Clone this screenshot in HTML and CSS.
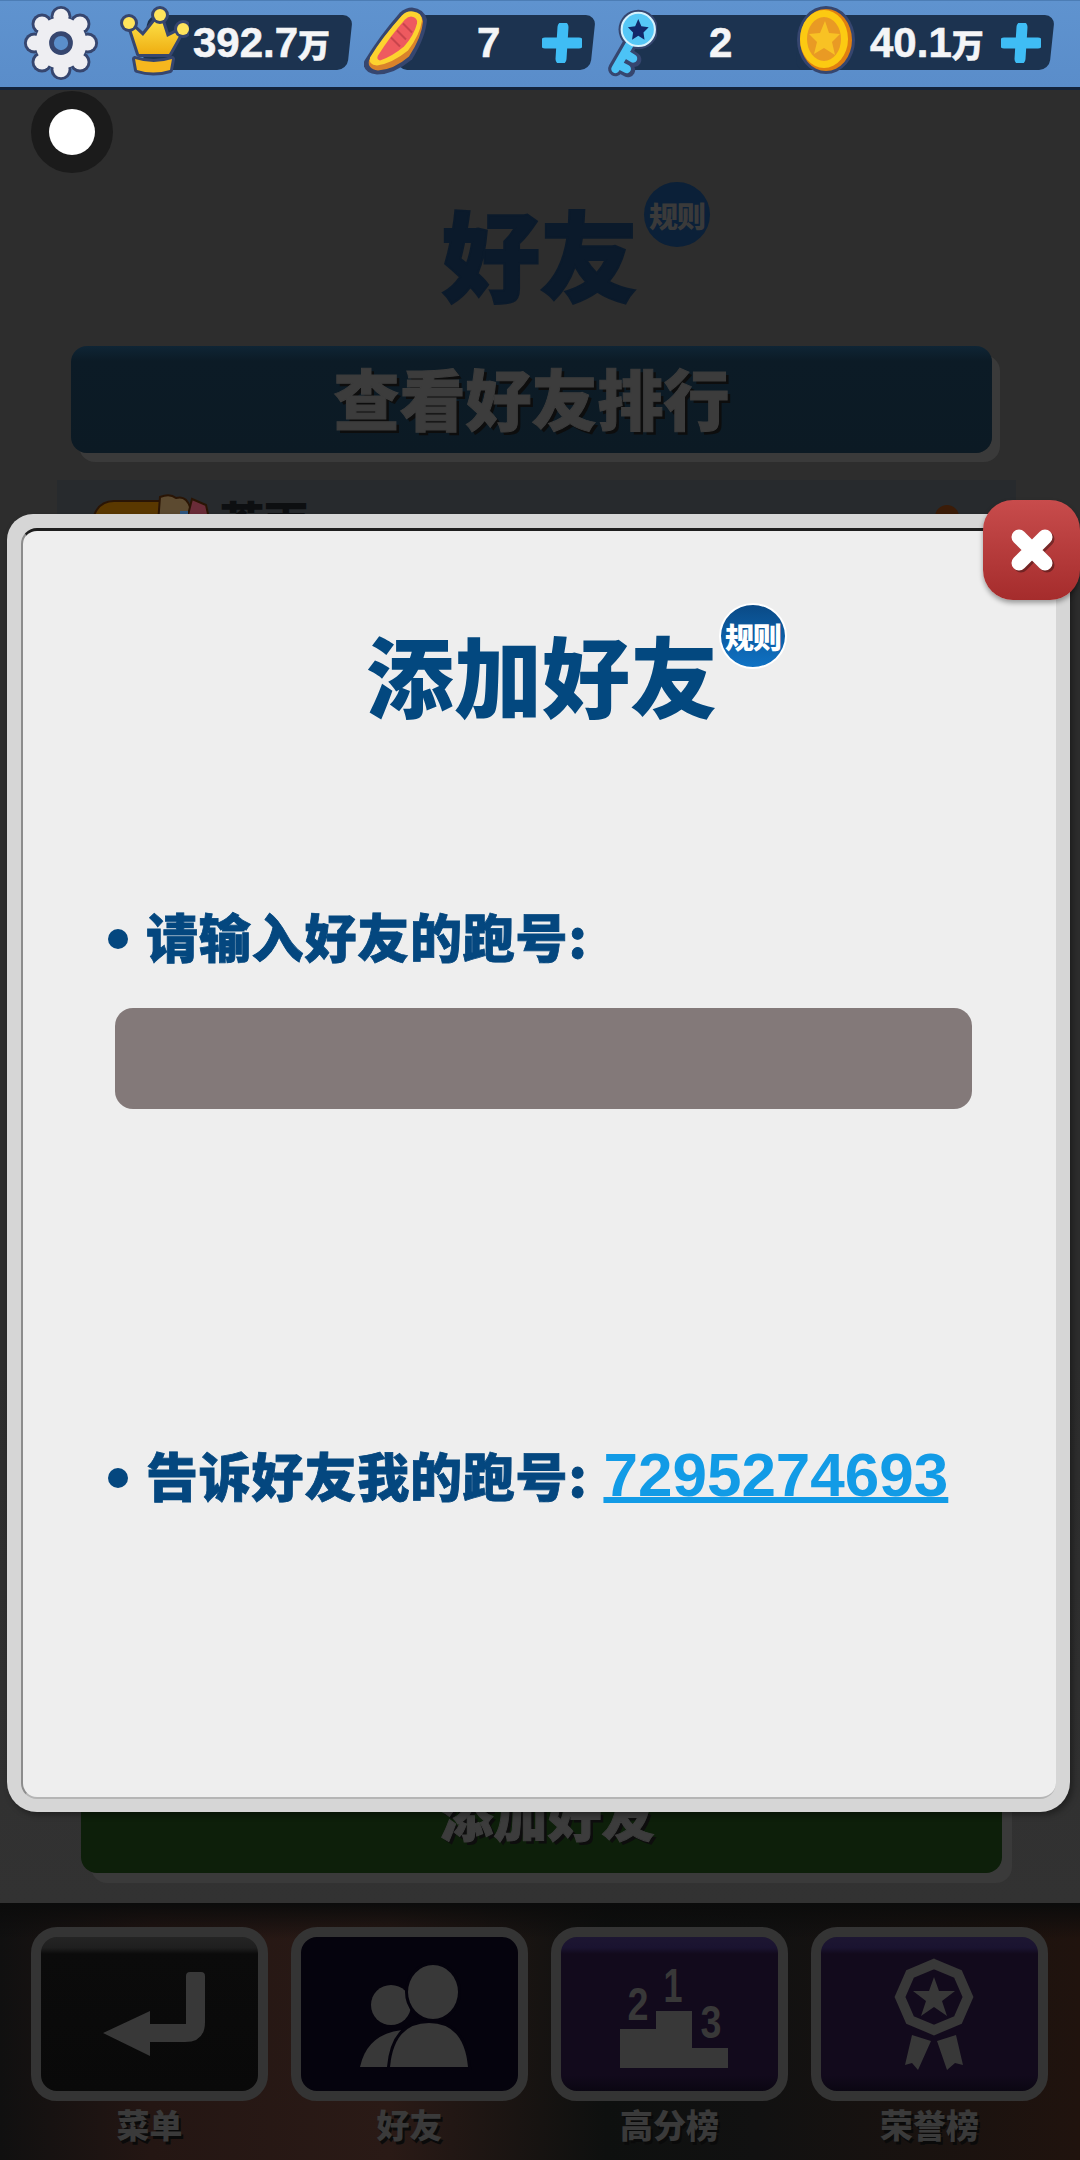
FILE: index.html
```html
<!DOCTYPE html>
<html lang="zh-CN">
<head>
    <meta charset="UTF-8">
    <meta name="viewport" content="width=device-width, initial-scale=1.0">
    <title>添加好友</title>
    <link rel="stylesheet" href="styles.css">
</head>
<body>

<div class="screen">

    <!-- Top Bar -->
    <header class="topbar">
        <svg class="gear" viewBox="0 0 80 80">
            <g fill="#36466f">
                <circle cx="40" cy="12" r="11"/><circle cx="60" cy="20" r="11"/><circle cx="68" cy="40" r="11"/><circle cx="60" cy="60" r="11"/>
                <circle cx="40" cy="68" r="11"/><circle cx="20" cy="60" r="11"/><circle cx="12" cy="40" r="11"/><circle cx="20" cy="20" r="11"/>
                <circle cx="40" cy="40" r="28"/>
            </g>
            <g fill="#eeeef2">
                <circle cx="40" cy="12" r="8"/><circle cx="60" cy="20" r="8"/><circle cx="68" cy="40" r="8"/><circle cx="60" cy="60" r="8"/>
                <circle cx="40" cy="68" r="8"/><circle cx="20" cy="60" r="8"/><circle cx="12" cy="40" r="8"/><circle cx="20" cy="20" r="8"/>
                <circle cx="40" cy="40" r="27"/>
            </g>
            <circle cx="40" cy="40" r="10" fill="#5b8fcb" stroke="#36466f" stroke-width="5"/>
        </svg>

        <div class="stat stat-score">
            <svg class="stat-icon crown" viewBox="0 0 71 71">
                <path class="outlined" fill="url(#crownFill)" d="M11 18 L25 31 L42 10 L49 32 L65 24 L51 49 L21 49 Z"/>
                <circle class="outlined" cx="11" cy="18" r="6" fill="#ffe45c"/>
                <circle class="outlined" cx="42" cy="10" r="6" fill="#ffe45c"/>
                <circle class="outlined" cx="65" cy="24" r="6" fill="#ffe45c"/>
                <path class="outlined" fill="#f6b71e" d="M17 54 Q36 60 54 54 L52 65 Q35 70 19 65 Z"/>
                <defs>
                    <linearGradient id="crownFill" x1="0" y1="0" x2="0" y2="1">
                        <stop offset="0" stop-color="#ffe84f"/>
                        <stop offset="1" stop-color="#efae12"/>
                    </linearGradient>
                </defs>
            </svg>
            <span class="stat-value">392.7<span class="wan">万</span></span>
        </div>

        <div class="stat stat-board">
            <svg class="stat-icon board" viewBox="0 0 63 68">
                <path fill="#36466f" d="M48 1 Q60 2 63 13 Q62 30 48 53 Q30 68 13 68 Q-2 66 0 55 Q15 30 36 6 Q42 1 48 1 Z"/>
                <path fill="#d9822b" d="M49 6 Q58 7 59 15 Q58 30 45 50 Q30 63 14 64 Q3 62 5 54 Q18 32 38 9 Q43 5 49 6 Z"/>
                <path fill="#fdd32f" d="M49 5 Q58 6 58 14 Q56 28 44 44 Q28 57 13 59 Q4 58 6 51 Q18 31 38 9 Q43 4 49 5 Z"/>
                <path fill="#ee5a5f" d="M47 10 Q54 11 53 17 Q50 29 40 40 Q28 50 16 54 Q12 53 14 49 Q26 30 41 13 Q44 10 47 10 Z"/>
                <path d="M27 31 L36 40 M33 24 L42 33 M39 17 L48 26" stroke="#c9444c" stroke-width="2"/>
            </svg>
            <span class="stat-value">7</span>
            <svg class="plus" viewBox="0 0 40 40"><path d="M21 4 L19 36 M3 20 L37 20" stroke="#3fbdf5" stroke-width="11" stroke-linecap="round"/></svg>
        </div>

        <div class="stat stat-key">
            <svg class="stat-icon key" viewBox="0 0 50 68">
                <path d="M32 20 L10 58 M19 43 L28 49 M13 54 L22 59" stroke="#36466f" stroke-width="14" stroke-linecap="round"/>
                <circle cx="32" cy="20" r="19" fill="#36466f"/>
                <path d="M32 20 L10 58 M19 43 L27 48 M13 54 L21 58" stroke="#4cc3f6" stroke-width="8" stroke-linecap="round"/>
                <circle cx="32" cy="20" r="16" fill="#56c8f7" stroke="#d6f2fd" stroke-width="2"/>
                <path fill="#12296a" d="M32 10 L35 17 L42 18 L37 23 L38 30 L32 26 L26 30 L27 23 L22 18 L29 17 Z"/>
            </svg>
            <span class="stat-value">2</span>
        </div>

        <div class="stat stat-coin">
            <svg class="stat-icon coin" viewBox="0 0 58 70">
                <ellipse cx="29" cy="35" rx="29" ry="34" fill="#36466f"/>
                <ellipse cx="29" cy="35" rx="26" ry="31" fill="#e07f10"/>
                <ellipse cx="27" cy="34" rx="24" ry="29" fill="#fcca12"/>
                <ellipse cx="27" cy="34" rx="17" ry="22" fill="#e99a24"/>
                <path fill="#f8c224" d="M28 16 L32 28 L43 29 L35 37 L38 50 L27 43 L17 49 L20 37 L12 29 L23 28 Z"/>
            </svg>
            <span class="stat-value">40.1<span class="wan">万</span></span>
            <svg class="plus" viewBox="0 0 40 40"><path d="M21 4 L19 36 M3 20 L37 20" stroke="#3fbdf5" stroke-width="11" stroke-linecap="round"/></svg>
        </div>
    </header>

    <!-- Dimmed page behind the dialog -->
    <main class="page">
        <div class="page-title">
            <h1>好友</h1>
            <span class="rule-badge rule-badge-dim">规则</span>
        </div>

        <button class="big-btn big-btn-blue">查看好友排行</button>

        <section class="friend-panel">
            <div class="friend-row">
                <svg class="friend-icon" viewBox="0 0 120 30">
                    <path fill="#5a3800" stroke="#2a1505" stroke-width="2" d="M2 30 Q6 8 24 8 H70 V30 Z"/>
                    <path fill="#5c4a30" stroke="#2a1505" stroke-width="2" d="M68 30 L70 4 Q80 0 86 5 Q96 2 100 14 L100 30 Z"/>
                    <path fill="#6a2c38" stroke="#2a1505" stroke-width="2" d="M96 30 L102 6 L116 12 L120 30 Z"/>
                    <rect x="90" y="18" width="8" height="12" fill="#2d5580"/>
                </svg>
                <span class="friend-name">苍雨</span>
                <span class="friend-medal"></span>
            </div>
        </section>

        <button class="big-btn big-btn-green">添加好友</button>
    </main>

    <!-- Bottom Nav -->
    <nav class="tabs">
        <div class="tab">
            <div class="tab-btn tab-menu">
                <svg viewBox="0 0 217 154"><path d="M62 96 L109 74 V87 H145 V39 Q145 35 149 35 H160 Q164 35 164 39 V85 Q164 105 144 105 H109 V119 Z"/></svg>
            </div>
            <span class="tab-label">菜单</span>
        </div>
        <div class="tab">
            <div class="tab-btn tab-friends">
                <svg viewBox="0 0 217 154">
                    <circle cx="90" cy="68" r="20"/>
                    <path d="M59 130 Q66 97 101 93 L92 130 Z"/>
                    <path class="cutout" d="M89 130 Q93 86 128 86 Q163 86 167 130 Z"/>
                    <ellipse class="cutout" cx="132" cy="55" rx="25" ry="27"/>
                </svg>
            </div>
            <span class="tab-label">好友</span>
        </div>
        <div class="tab">
            <div class="tab-btn tab-ranks">
                <svg viewBox="0 0 217 154">
                    <path d="M59 92 H95 V74 H131 V111 H167 V131 H59 Z"/>
                    <text class="podium-num" x="112" y="65" font-size="48" textLength="19" lengthAdjust="spacingAndGlyphs">1</text>
                    <text class="podium-num" x="77" y="83" font-size="46" textLength="21" lengthAdjust="spacingAndGlyphs">2</text>
                    <text class="podium-num" x="150" y="101" font-size="46" textLength="21" lengthAdjust="spacingAndGlyphs">3</text>
                </svg>
            </div>
            <span class="tab-label">高分榜</span>
        </div>
        <div class="tab">
            <div class="tab-btn tab-honor">
                <svg viewBox="0 0 217 154">
                    <path class="badge-ring" d="M113 27 L137 37 L147 60 L137 83 L113 93 L89 83 L79 60 L89 37 Z"/>
                    <path d="M113 40 L118 54 L134 54 L121 64 L126 79 L113 70 L100 79 L105 64 L92 54 L108 54 Z"/>
                    <path d="M91 98 L110 104 L97 133 L91 126 L84 128 Z"/>
                    <path d="M135 98 L116 104 L126 133 L134 126 L142 128 Z"/>
                </svg>
            </div>
            <span class="tab-label">荣誉榜</span>
        </div>
    </nav>

    <!-- Floating touch button -->
    <div class="float-dot"><span></span></div>

    <!-- Add Friend Dialog -->
    <div class="dialog">
        <div class="dialog-inner">
            <div class="dialog-title">
                <h2>添加好友</h2>
                <span class="rule-badge">规则</span>
            </div>

            <div class="dialog-line line-input">
                <span class="bullet"></span>
                <span class="line-text">请输入好友的跑号:</span>
            </div>
            <div class="id-input"></div>

            <div class="dialog-line line-tell">
                <span class="bullet"></span>
                <span class="line-text">告诉好友我的跑号:</span>
                <a class="my-id" href="#">7295274693</a>
            </div>
        </div>
    </div>

    <button class="close-btn">
        <svg viewBox="0 0 44 44"><path d="M9 9 L35 35 M35 9 L9 35" stroke="#fff" stroke-width="15" stroke-linecap="round"/></svg>
    </button>
</div>

</body>
</html>
```

FILE: styles.css
```css
/* General Styles */
* {
    box-sizing: border-box;
}

body {
    margin: 0;
    font-family: 'Noto Sans CJK SC', 'Liberation Sans', sans-serif;
    background-color: #2d2d2d;
}

h1, h2 {
    margin: 0;
    font-weight: 900;
}

button {
    font-family: inherit;
    border: none;
    padding: 0;
}

.screen {
    position: relative;
    width: 1080px;
    height: 2160px;
    overflow: hidden;
    display: flex;
    flex-direction: column;
}

/* Top Bar */
.topbar {
    height: 90px;
    flex-shrink: 0;
    display: flex;
    align-items: center;
    padding: 0 0 3px 23px;
    background: linear-gradient(#5f93cf, #5a8dca);
    border-top: 1px solid #4c7db5;
    border-bottom: 3px solid #13233b;
}

.gear {
    width: 76px;
    height: 76px;
    margin-right: 46px;
    flex-shrink: 0;
}

.stat {
    position: relative;
    height: 55px;
    display: flex;
    align-items: center;
    flex-shrink: 0;
}

.stat::before {
    content: "";
    position: absolute;
    inset: 0;
    background-color: #1c3350;
    border-radius: 10px;
    transform: skewX(-6deg);
}

.stat > * {
    position: relative;
    flex-shrink: 0;
}

.stat-score {
    width: 205px;
}

.stat-board {
    width: 193px;
    margin-left: 50px;
}

.stat-key {
    width: 200px;
    margin-left: 34px;
}

.stat-coin {
    width: 254px;
    margin-left: -29px;
}

.stat-icon {
    height: 71px;
}

.crown {
    width: 71px;
    margin-left: -27px;
    margin-top: -4px;
}

.board {
    width: 63px;
    margin-left: -36px;
    margin-top: -4px;
}

.key {
    width: 52px;
    height: 72px;
    margin-left: -22px;
    margin-top: 2px;
}

.coin {
    width: 60px;
    height: 70px;
    margin-left: -2px;
    margin-top: -6px;
}

.outlined {
    stroke: #36466f;
    stroke-width: 6px;
    stroke-linejoin: round;
    paint-order: stroke;
}

.stat-value {
    font-family: 'Liberation Sans', sans-serif;
    font-weight: 700;
    font-size: 42px;
    color: #f4f5f7;
    white-space: nowrap;
    -webkit-text-stroke: 0.6px #f4f5f7;
}

.stat-score .stat-value {
    margin-left: 4px;
}

.stat-board .stat-value {
    margin-left: 50px;
}

.stat-key .stat-value {
    margin-left: 52px;
}

.stat-coin .stat-value {
    margin-left: 14px;
}

.wan {
    font-family: 'Noto Sans CJK SC', sans-serif;
    font-size: 32px;
    font-weight: 900;
}

.plus {
    width: 40px;
    height: 40px;
    margin-left: auto;
    margin-right: 11px;
}

/* Page behind dialog */
.page {
    flex: 1;
    display: flex;
    flex-direction: column;
    align-items: center;
    padding-top: 111px;
    background: linear-gradient(#2d2d2d 70%, #323232);
}

.page-title {
    position: relative;
    height: 108px;
}

.page-title h1 {
    font-size: 98px;
    line-height: 100px;
    color: #0b1a2b;
    -webkit-text-stroke: 2px #0b1a2b;
}

.rule-badge {
    position: absolute;
    left: 353px;
    top: -27px;
    width: 68px;
    height: 66px;
    border-radius: 50%;
    display: flex;
    align-items: center;
    justify-content: center;
    font-size: 29px;
    font-weight: 900;
    letter-spacing: -1px;
    color: #fff;
    border: 2px solid #fff;
    background: linear-gradient(#0a4a86, #0f72c4);
}

.rule-badge-dim {
    left: 202px;
    top: -19px;
    width: 66px;
    height: 65px;
    color: #3a3a3a;
    border: none;
    background: #0b2038;
}

.big-btn {
    display: block;
    flex-shrink: 0;
    font-weight: 900;
    color: #3c3c3c;
    text-shadow: 3px 3px 0 #0d0d0d;
    border-radius: 16px;
}

.big-btn-blue {
    width: 921px;
    height: 107px;
    margin: 37px 0 0 -17px;
    font-size: 66px;
    line-height: 100px;
    padding-bottom: 7px;
    background: linear-gradient(#0f2535, #0c1b26 14%, #0c1a24);
    box-shadow: 8px 9px 0 #3a3a3a;
    -webkit-text-stroke: 1px #3c3c3c;
}

.big-btn-green {
    width: 921px;
    height: 107px;
    margin: 0 0 0 3px;
    font-size: 54px;
    line-height: 72px;
    padding: 0 0 11px 12px;
    background: #0d1f0a;
    box-shadow: 10px 10px 0 #3a3a3a;
    -webkit-text-stroke: 1px #3c3c3c;
}

.friend-panel {
    width: 959px;
    height: 1286px;
    margin: 27px 0 0 -7px;
    padding: 13px 0 0 33px;
    background-color: #272a2d;
    flex-shrink: 0;
}

.friend-row {
    position: relative;
    display: flex;
    align-items: flex-start;
}

.friend-icon {
    width: 120px;
    height: 30px;
}

.friend-name {
    margin-left: 10px;
    margin-top: 5px;
    font-size: 44px;
    line-height: 44px;
    font-weight: 900;
    color: #0d0f11;
}

.friend-medal {
    position: absolute;
    left: 845px;
    top: 12px;
    width: 24px;
    height: 24px;
    border-radius: 50%;
    background-color: #3b1c08;
}

/* Bottom Nav */
.tabs {
    height: 257px;
    flex-shrink: 0;
    display: grid;
    grid-template-columns: repeat(4, 237px);
    gap: 23px;
    padding: 24px 0 0 31px;
    background:
        linear-gradient(#0b0b0b, transparent 36px),
        linear-gradient(90deg, #101010, #241613 14%, #2a1a16 36%, #0e100f 56%, #111 70%, #20130e 100%);
}

.tab {
    display: flex;
    flex-direction: column;
    align-items: center;
}

.tab-btn {
    width: 237px;
    height: 174px;
    border: 10px solid #343434;
    border-radius: 26px;
    overflow: hidden;
}

.tab-btn svg {
    display: block;
    width: 217px;
    height: 154px;
    fill: #383838;
}

.tab-menu {
    background: linear-gradient(#242424, #1f1f1f 7%, #0b0b0b 11%, #090909);
}

.tab-friends {
    background-color: #05030d;
}

.tab-ranks, .tab-honor {
    background: linear-gradient(#1d1632, #1a1330 7%, #120a1c 11%, #120a1c 90%, #0a0612);
}

.cutout {
    stroke: #05030d;
    stroke-width: 6px;
    paint-order: stroke;
}

.podium-num {
    font-family: 'Liberation Sans', sans-serif;
    font-weight: 700;
    text-anchor: middle;
}

.badge-ring {
    fill: none;
    stroke: #383838;
    stroke-width: 10px;
}

.tab-label {
    margin-top: 3px;
    font-size: 33px;
    line-height: 40px;
    font-weight: 900;
    color: #3a3a3a;
    text-shadow: 2px 3px 0 #0a0a0a;
}

/* Floating dot */
.float-dot {
    position: absolute;
    left: 31px;
    top: 91px;
    width: 82px;
    height: 82px;
    border-radius: 50%;
    background-color: #1b1b1b;
    display: flex;
    align-items: center;
    justify-content: center;
}

.float-dot span {
    width: 46px;
    height: 46px;
    border-radius: 50%;
    background-color: #fff;
}

/* Dialog */
.dialog {
    position: absolute;
    left: 7px;
    top: 514px;
    width: 1063px;
    height: 1298px;
    padding: 14px 14px 13px 14px;
    background-color: #d6d6d6;
    border-radius: 26px 26px 30px 30px;
    box-shadow: 3px 3px 6px rgba(0, 0, 0, 0.35);
}

.dialog-inner {
    height: 100%;
    padding-top: 99px;
    background-color: #eeeeee;
    border-top: 3px solid #1e1e1e;
    border-left: 2px solid #8c8c8c;
    border-bottom: 2px solid #b5b5b5;
    border-radius: 16px;
}

.dialog-title {
    position: relative;
    width: 352px;
    margin-left: 343px;
}

.dialog-title h2 {
    font-size: 88px;
    line-height: 86px;
    color: #03487f;
    white-space: nowrap;
}

.dialog-line {
    display: flex;
    align-items: center;
    padding-left: 85px;
    font-size: 52px;
    line-height: 60px;
    font-weight: 900;
    color: #04477f;
}

.line-text {
    letter-spacing: 0.8px;
    -webkit-text-stroke: 0.8px #04477f;
}

.line-input {
    margin-top: 190px;
}

.line-tell {
    margin-top: 336px;
}

.bullet {
    width: 20px;
    height: 20px;
    margin-top: 5px;
    border-radius: 50%;
    margin-right: 18px;
    background-color: #04477f;
}

.id-input {
    width: 857px;
    height: 101px;
    margin: 42px 0 0 92px;
    border-radius: 18px;
    background-color: #837979;
}

.my-id {
    margin-left: 16px;
    font-family: 'Liberation Sans', sans-serif;
    font-size: 62px;
    font-weight: 700;
    color: #129be6;
    text-decoration: underline;
    text-decoration-thickness: 6px;
    text-underline-offset: 1px;
}

/* Close Button */
.close-btn {
    position: absolute;
    right: 0;
    top: 500px;
    width: 97px;
    height: 100px;
    border-radius: 30px;
    display: flex;
    align-items: center;
    justify-content: center;
    background: linear-gradient(#c84c4c, #a52c2c);
    box-shadow: 0 3px 5px rgba(0, 0, 0, 0.35);
}

.close-btn svg {
    width: 44px;
    height: 44px;
    filter: drop-shadow(2px 2px 0 rgba(0, 0, 0, 0.35));
}
```
